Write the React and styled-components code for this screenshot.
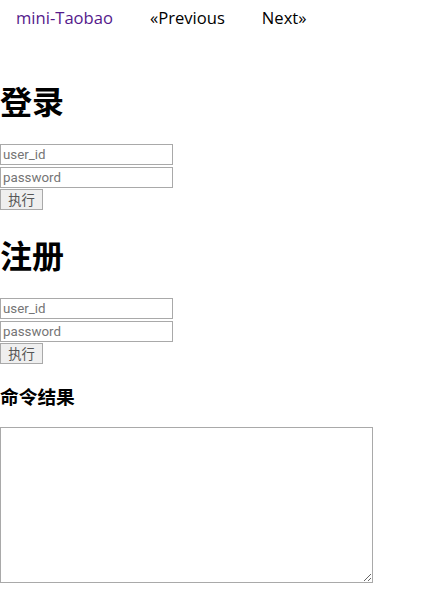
import React from "react";
import styled, { createGlobalStyle } from "styled-components";

const Global = createGlobalStyle`
  body {
    margin: 0;
    font-family: "Noto Sans", "Noto Sans CJK SC", sans-serif;
    background: #fff;
    color: #000;
  }
`;

const Nav = styled.nav`
  display: flex;
  align-items: center;
  gap: 37px;
  height: 35px;
  padding: 0 16px;
  font-size: 16.6px;
`;

const NavLink = styled.a`
  color: ${(p) => (p.$visited ? "#551a8b" : "#000")};
  text-decoration: none;
  font-family: "Open Sans", "Noto Sans CJK SC", sans-serif;
`;

const Main = styled.main`
  padding-top: 21px;
`;

const Title = styled.h1`
  font-family: "Noto Sans CJK SC", sans-serif;
  font-size: 32px;
  font-weight: bold;
  margin: 21px 0;
`;

const SubTitle = styled.h3`
  font-family: "Noto Sans CJK SC", sans-serif;
  font-size: 18.72px;
  font-weight: bold;
  margin: 18px 0;
`;

const Form = styled.form`
  display: flex;
  flex-direction: column;
  align-items: flex-start;
  gap: 2px;
`;

const Input = styled.input`
  box-sizing: border-box;
  width: 173px;
  height: 21px;
  margin: 0;
  padding: 1px 2px;
  border: 1px solid #a9a9a9;
  font-family: Roboto, "Noto Sans CJK SC", sans-serif;
  font-size: 13.33px;
  &::placeholder {
    color: #757575;
  }
`;

const Button = styled.button`
  box-sizing: border-box;
  height: 21px;
  width: 43px;
  margin: -1px 0 0;
  padding: 0 6px;
  border: 1px solid #a9a9a9;
  background: #efefef;
  color: #555;
  font-family: "Noto Sans CJK SC", sans-serif;
  font-size: 13.33px;
  line-height: 1;
`;

const Result = styled.textarea`
  box-sizing: border-box;
  display: block;
  width: 373px;
  height: 156px;
  margin: 0;
  border: 1px solid #a9a9a9;
`;

function AuthForm() {
  return (
    <Form onSubmit={(e) => e.preventDefault()}>
      <Input placeholder="user_id" />
      <Input placeholder="password" type="password" />
      <Button type="submit">执行</Button>
    </Form>
  );
}

export default function App() {
  return (
    <>
      <Global />
      <Nav>
        <NavLink href="#" $visited>mini-Taobao</NavLink>
        <NavLink href="#">«Previous</NavLink>
        <NavLink href="#">Next»</NavLink>
      </Nav>
      <Main>
        <Title>登录</Title>
        <AuthForm />
        <Title>注册</Title>
        <AuthForm />
        <SubTitle>命令结果</SubTitle>
        <Result />
      </Main>
    </>
  );
}
